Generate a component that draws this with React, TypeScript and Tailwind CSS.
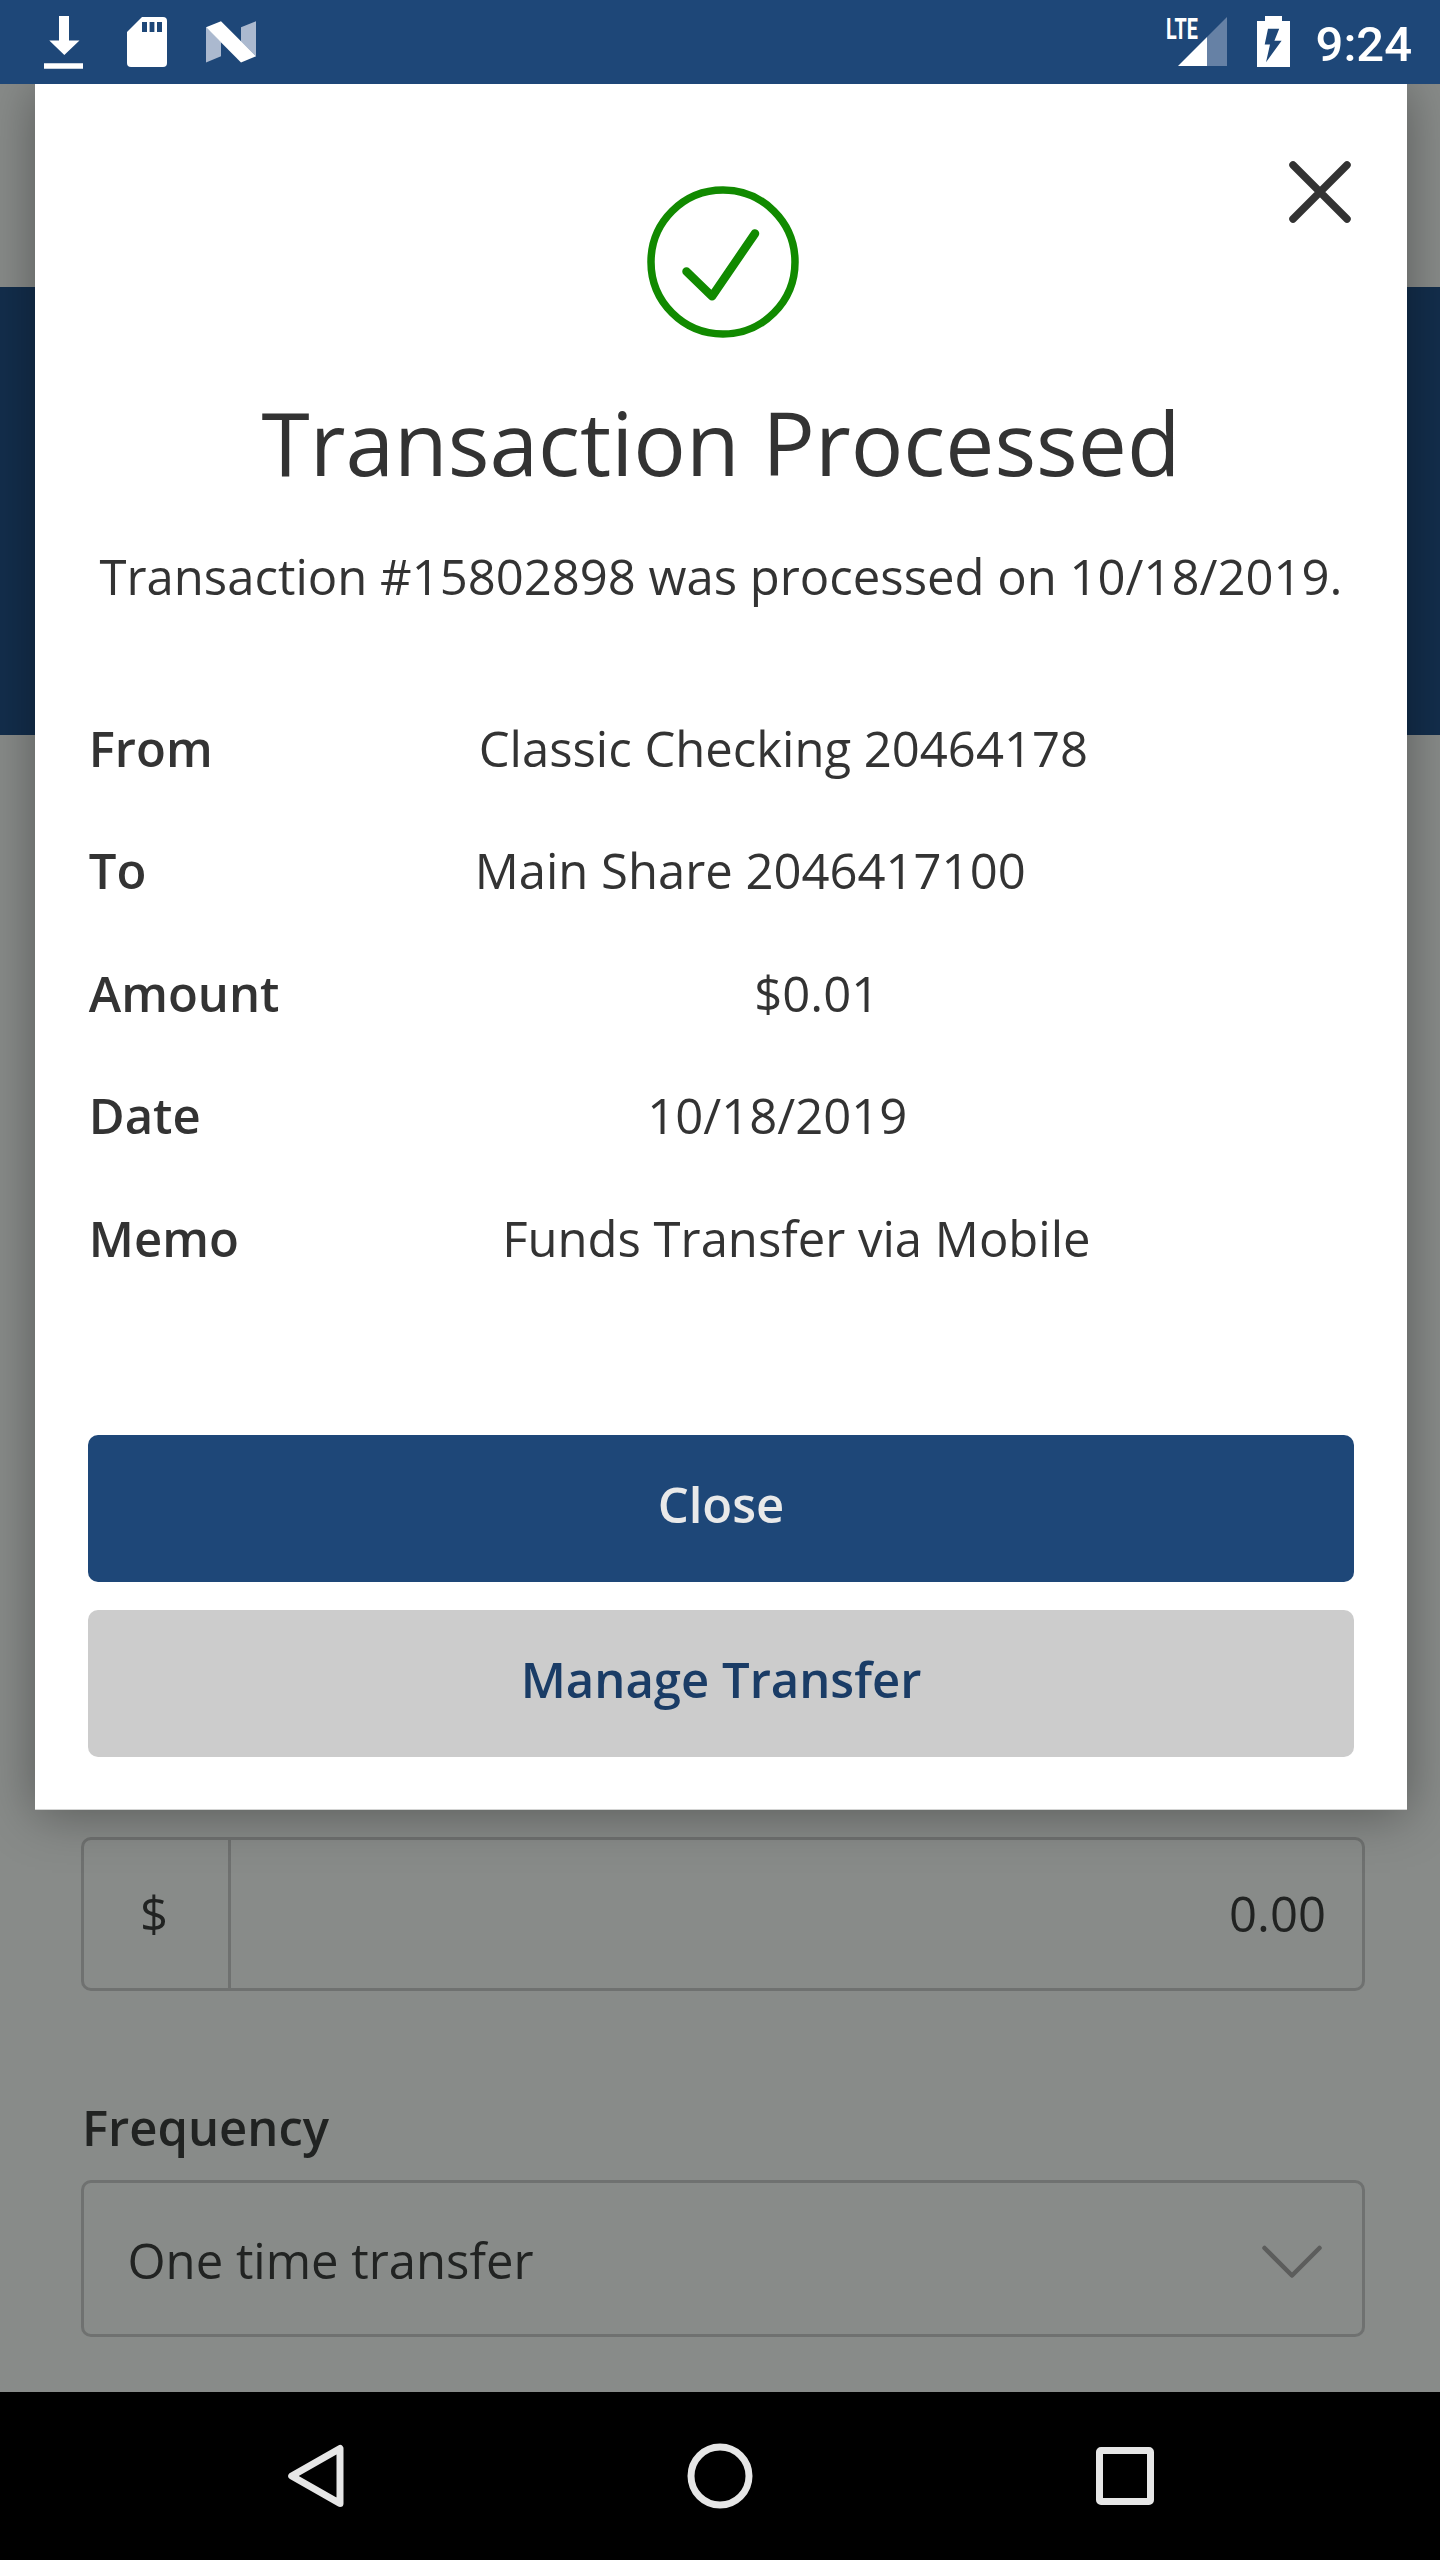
import type { ReactNode } from "react";

const details = [
  { label: "From", value: "Classic Checking 20464178" },
  { label: "To", value: "Main Share 2046417100" },
  { label: "Amount", value: "$0.01" },
  { label: "Date", value: "10/18/2019" },
  { label: "Memo", value: "Funds Transfer via Mobile" },
];

function StatusBar() {
  return (
    <header className="flex h-[84px] shrink-0 items-start justify-between bg-[#1e4778] pr-[28px] pl-[44px] text-white">
      <div className="flex items-start pt-[16px]">
        <svg className="h-[53px] w-[39px]" viewBox="0 0 39 53" fill="currentColor">
          <path d="M15 0h10v24.5h10.5L20.3 39 5.3 24.5H15zM0 47.3h39v5.4H0z" />
        </svg>
        <svg className="mt-px ml-[44px] h-[50px] w-[40px]" viewBox="0 0 40 50">
          <path fill="currentColor" d="M15 0h21a4 4 0 0 1 4 4v42a4 4 0 0 1-4 4H4a4 4 0 0 1-4-4V15z" />
          <path fill="#1e4778" d="M15 5h5v10h-5zM22.6 5h4.8v10h-4.8zM30 5h5v10h-5z" />
        </svg>
        <svg className="mt-[5px] ml-[39px] h-[42px] w-[50px]" viewBox="0 0 50 42">
          <path fill="#abb9cf" d="M0 6.3 15 21v14.3L0 41.5zM35 6.3 50 .3v35L35 20.5z" />
          <path fill="currentColor" d="M0 6.3 15 .3l35 35-15 6.2z" />
        </svg>
      </div>
      <div className="flex items-start">
        <span className="mt-[15px] inline-block h-[29px] w-[12px] origin-left scale-x-[0.67] font-[Roboto] text-[29.5px] leading-[29px] font-bold whitespace-nowrap">
          LTE
        </span>
        <svg className="mt-[17px] h-[49px] w-[49px]" viewBox="0 0 49 49">
          <path fill="#6681a5" d="M49 0v49H29V20z" />
          <path fill="currentColor" d="M0 49 29 20v29z" />
        </svg>
        <svg className="mt-[16px] ml-[30px] h-[51px] w-[33px]" viewBox="0 0 33 51">
          <path fill="currentColor" d="M8 0h17v5h8v46H0V5h8z" />
          <path fill="#1e4778" d="M11 12.7h11.2l-4.8 12h7.2L9 46.3l4-17.8H7.7z" />
        </svg>
        <span className="mt-[16px] ml-[26px] font-[Roboto] text-[49px] leading-[57px] font-medium">9:24</span>
      </div>
    </header>
  );
}

function TransferForm() {
  return (
    <div className="flex h-full flex-col bg-[#888b89]">
      <div className="h-[203px] shrink-0" />
      <div className="h-[448px] shrink-0 bg-[#132e4c]" />
      <div className="flex flex-1 flex-col pt-[1102px] pr-[75px] pl-[81px] text-[#212322]">
        <div className="flex h-[154px] shrink-0 rounded-[10px] border-[3px] border-[#6f7170]">
          <div className="flex w-[147px] items-center justify-center border-r-[3px] border-[#6f7170] pr-[4px] pb-[1px]">$</div>
          <div className="flex flex-1 items-center justify-end pr-[36px] pb-[1px]">0.00</div>
        </div>
        <label className="mt-[103px] pl-[1px] leading-[67px] font-semibold">Frequency</label>
        <div className="mt-[19px] flex h-[157px] shrink-0 items-center justify-between rounded-[10px] border-[3px] border-[#6f7170] pt-[4px] pr-[40px] pl-[43.5px]">
          <span>One time transfer</span>
          <svg className="mt-[2px] h-[34px] w-[60px]" viewBox="0 0 60 34" fill="none" stroke="#5c5d5c" strokeWidth="4.5" strokeLinecap="round" strokeLinejoin="round">
            <path d="M2.5 3 30 30.5 57.5 3" />
          </svg>
        </div>
      </div>
    </div>
  );
}

function ModalButton({ className, children }: { className: string; children: ReactNode }) {
  return (
    <button className={`flex h-[147px] items-center justify-center rounded-[10px] pb-[9px] font-semibold ${className}`}>
      {children}
    </button>
  );
}

function Modal() {
  return (
    <section className="absolute top-0 left-[35px] flex h-[1726px] w-[1372px] flex-col border-b border-[#d4d5d4] bg-white px-[53px] text-[#333333] shadow-[0_4px_49px_rgba(0,0,0,0.36)]">
      <button aria-label="Close dialog" className="absolute top-[76px] right-[55px]">
        <svg className="h-[64px] w-[64px]" viewBox="0 0 64 64" fill="none" stroke="currentColor" strokeWidth="7.5" strokeLinecap="round">
          <path d="M5 5l54 54M59 5 5 59" />
        </svg>
      </button>
      <svg className="mt-[102px] ml-[559px] h-[152px] w-[152px]" viewBox="0 0 152 152" fill="none" stroke="#118a00" strokeLinecap="round" strokeLinejoin="round">
        <circle cx="76" cy="76" r="72" strokeWidth="7.5" />
        <path strokeWidth="8.5" d="M39.5 85.5 65 110.3 108 47.5" />
      </svg>
      <h1 className="mt-[44px] text-center text-[87.5px] leading-[120px] whitespace-nowrap">Transaction Processed</h1>
      <p className="mt-[41px] text-center leading-[67px] whitespace-nowrap">
        Transaction #15802898 was processed on 10/18/2019.
      </p>
      <dl className="mt-[77px] pl-[0.75px]">
        {details.map(({ label, value }) => (
          <div key={label} className="flex h-[122.5px] items-center">
            <dt className="font-semibold">{label}</dt>
            <dd className="flex-1 text-center">{value}</dd>
          </div>
        ))}
      </dl>
      <div className="mt-auto mb-[52px] flex flex-col gap-[28px]">
        <ModalButton className="bg-[#1e4778] text-[#e9e9e9]">Close</ModalButton>
        <ModalButton className="bg-[#cccccc] text-[#1a3c66]">Manage Transfer</ModalButton>
      </div>
    </section>
  );
}

function NavBar() {
  return (
    <nav className="flex h-[168px] shrink-0 items-center justify-between bg-black pr-[285px] pl-[287px]">
      <svg className="h-[66px] w-[57px]" viewBox="0 0 57 66" fill="none" stroke="#e6e6e6" strokeWidth="7" strokeLinejoin="round">
        <path d="M53 5.5v55L4.7 33z" />
      </svg>
      <svg className="h-[66px] w-[66px]" viewBox="0 0 66 66" fill="none" stroke="#e6e6e6" strokeWidth="7">
        <circle cx="33" cy="33" r="29" />
      </svg>
      <svg className="h-[60px] w-[60px]" viewBox="0 0 60 60" fill="none" stroke="#e6e6e6" strokeWidth="7">
        <rect x="4.5" y="4.5" width="51" height="51" rx="1.5" />
      </svg>
    </nav>
  );
}

export default function App() {
  return (
    <div className="flex h-[2560px] w-[1440px] flex-col overflow-hidden font-['Open_Sans',sans-serif] text-[49px] leading-[67px]">
      <StatusBar />
      <main className="relative min-h-0 flex-1 overflow-hidden">
        <TransferForm />
        <Modal />
      </main>
      <NavBar />
    </div>
  );
}
